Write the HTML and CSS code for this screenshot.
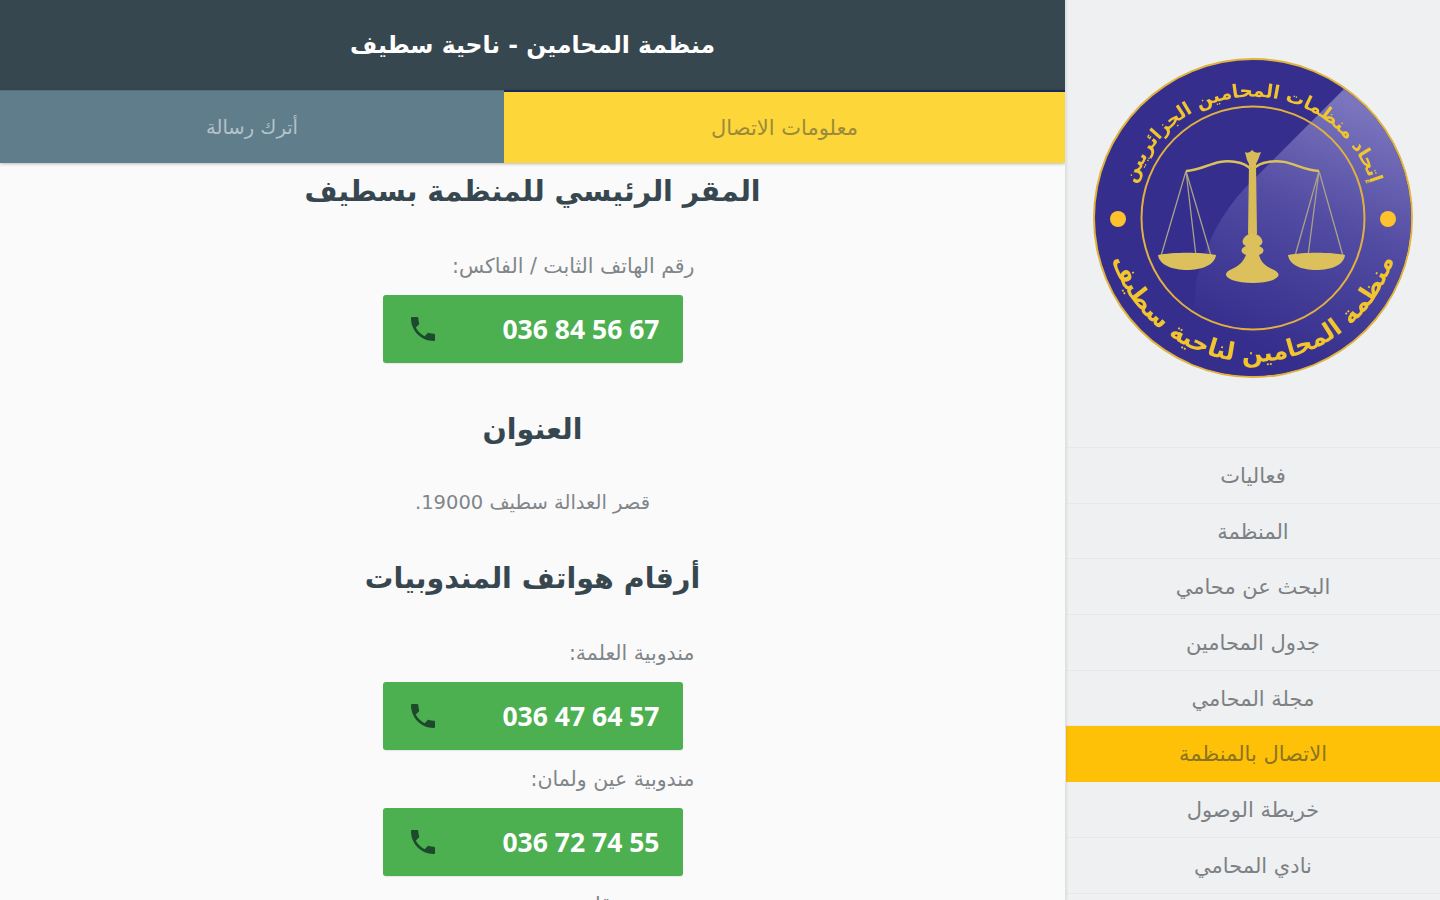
FILE: index.html
```html
<!DOCTYPE html>
<html lang="ar" dir="rtl">
<head>
<meta charset="utf-8">
<title>منظمة المحامين - ناحية سطيف</title>
<link rel="stylesheet" href="styles.css">
</head>
<body>
<div class="app">
  <aside class="sidebar">
    <div class="logo-box">
      <svg class="logo" viewBox="0 0 320 320" xmlns="http://www.w3.org/2000/svg" aria-label="شعار المنظمة">
        <defs>
          <clipPath id="disc"><circle cx="160" cy="160" r="158"/></clipPath>
          <linearGradient id="gloss" gradientUnits="userSpaceOnUse" x1="270" y1="50" x2="170" y2="290">
            <stop offset="0" stop-color="#7a75bd"/>
            <stop offset=".45" stop-color="#534ca3"/>
            <stop offset="1" stop-color="#352e8c"/>
          </linearGradient>
          <path id="arcTop" d="M38 146 A123 123 0 0 1 282 146"/>
          <path id="arcBottom" d="M16 190 A148 148 0 0 0 304 190"/>
        </defs>
        <circle cx="160" cy="160" r="160" fill="#e0b33c"/>
        <circle cx="160" cy="160" r="158" fill="#352e8c"/>
        <g clip-path="url(#disc)">
          <path d="M252 30 L160 122 C130 150 110 190 103 225 L95 330 L330 330 L330 30 Z" fill="url(#gloss)"/>
        </g>
        <circle cx="160" cy="160" r="111.500" fill="none" stroke="#e0b040" stroke-width="2"/>
        <circle cx="25" cy="161" r="8" fill="#fdc22d"/>
        <circle cx="295" cy="161" r="8" fill="#fdc22d"/>
        <g fill="none" stroke="#a9a08a" stroke-width="1.300">
          <path d="M93 113 L68 198 M93 113 L118 198 M93 113 L103 198"/>
          <path d="M226 113 L202 198 M226 113 L250 198 M226 113 L215 198"/>
        </g>
        <path d="M93 113 C112 112 122 100 143 104 C150 105 155 108 159 112 C163 108 168 105 175 104 C196 100 206 112 226 113" fill="none" stroke="#dcc05c" stroke-width="2.500"/>
        <path d="M152 94 Q156 96 159 92 Q162 96 168 94 L165 102 L163 106 L164 176 L155 176 L156 106 L154 102 Z" fill="#d8bc58"/>
        <path d="M156 176 C148 180 148 186 153 188 C147 190 147 195 153 197 C150 204 146 208 139 211 C132 214 130 218 139 222 C150 226 170 226 180 222 C189 218 186 214 179 211 C172 208 168 204 166 197 C172 195 172 190 166 188 C171 186 171 180 163 176 Z" fill="#dcc05c"/>
        <path d="M65 197 C80 194 108 194 123 197 C122 207 108 212 94 212 C80 212 66 207 65 197 Z" fill="#dcc05c"/>
        <path d="M195 197 C210 194 238 194 252 197 C251 207 238 212 223 212 C209 212 196 207 195 197 Z" fill="#dcc05c"/>
        <text class="logo-text logo-top"><textPath href="#arcTop" startOffset="50%" text-anchor="middle">إتحاد منظمات المحامين الجزائريين</textPath></text>
        <text class="logo-text logo-bottom"><textPath href="#arcBottom" startOffset="50%" text-anchor="middle">منظمة المحامين لناحية سطيف</textPath></text>
      </svg>
    </div>
    <nav class="menu">
      <a class="menu-item">فعاليات</a>
      <a class="menu-item">المنظمة</a>
      <a class="menu-item">البحث عن محامي</a>
      <a class="menu-item">جدول المحامين</a>
      <a class="menu-item">مجلة المحامي</a>
      <a class="menu-item active">الاتصال بالمنظمة</a>
      <a class="menu-item">خريطة الوصول</a>
      <a class="menu-item">نادي المحامي</a>
    </nav>
  </aside>
  <main class="main">
    <header class="topbar">منظمة المحامين - ناحية سطيف</header>
    <div class="tabs">
      <div class="tab tab-active">معلومات الاتصال</div>
      <div class="tab tab-idle">أترك رسالة</div>
    </div>
    <section class="content">
      <h2 class="heading heading-first">المقر الرئيسي للمنظمة بسطيف</h2>
      <div class="phone-block block-main">
        <p class="label">رقم الهاتف الثابت / الفاكس:</p>
        <a class="call"><svg class="phone" viewBox="0 0 24 24"><path d="M6.600 10.800c1.400 2.800 3.800 5.100 6.600 6.600l2.200-2.200c.3-.3.700-.4 1-.2 1.100.4 2.300.6 3.600.6.600 0 1 .4 1 1V20c0 .6-.4 1-1 1C10.600 21 3 13.400 3 4c0-.6.400-1 1-1h3.500c.6 0 1 .4 1 1 0 1.300.2 2.500.6 3.600.1.300 0 .7-.2 1z"/></svg><span class="num" dir="ltr">036 84 56 67</span></a>
      </div>
      <h2 class="heading heading-address">العنوان</h2>
      <p class="address">قصر العدالة سطيف 19000.</p>
      <h2 class="heading heading-phones">أرقام هواتف المندوبيات</h2>
      <div class="phone-block block-first">
        <p class="label">مندوبية العلمة:</p>
        <a class="call"><svg class="phone" viewBox="0 0 24 24"><path d="M6.600 10.800c1.400 2.800 3.800 5.100 6.600 6.600l2.200-2.200c.3-.3.700-.4 1-.2 1.100.4 2.300.6 3.600.6.600 0 1 .4 1 1V20c0 .6-.4 1-1 1C10.600 21 3 13.400 3 4c0-.6.400-1 1-1h3.500c.6 0 1 .4 1 1 0 1.300.2 2.500.6 3.600.1.300 0 .7-.2 1z"/></svg><span class="num" dir="ltr">036 47 64 57</span></a>
      </div>
      <div class="phone-block">
        <p class="label">مندوبية عين ولمان:</p>
        <a class="call"><svg class="phone" viewBox="0 0 24 24"><path d="M6.600 10.800c1.400 2.800 3.800 5.100 6.600 6.600l2.200-2.200c.3-.3.700-.4 1-.2 1.100.4 2.300.6 3.600.6.600 0 1 .4 1 1V20c0 .6-.4 1-1 1C10.600 21 3 13.400 3 4c0-.6.400-1 1-1h3.500c.6 0 1 .4 1 1 0 1.300.2 2.500.6 3.600.1.300 0 .7-.2 1z"/></svg><span class="num" dir="ltr">036 72 74 55</span></a>
      </div>
      <div class="phone-block">
        <p class="label">مندوبية بوقاعة:</p>
      </div>
    </section>
  </main>
</div>
</body>
</html>
```

FILE: styles.css
```css
* { box-sizing: border-box; }
html, body { margin: 0; height: 100%; overflow: hidden; }
body {
  font-family: "DejaVu Sans", "Noto Sans", sans-serif;
  background: #fafafa;
  color: #757575;
}
.app { display: flex; height: 900px; }
.sidebar {
  width: 374px;
  flex: none;
  background: #eef0f2;
  overflow: hidden;
}
.logo-box { height: 447px; padding: 58px 0 0 0; display: flex; justify-content: center; }
.logo { width: 320px; height: 320px; display: block; filter: blur(.5px); }
.logo-text { fill: #f2c52e; font-weight: 700; font-family: "DejaVu Sans", sans-serif; }
.logo-top { font-size: 18.500px; }
.logo-bottom { font-size: 24.500px; }
.menu { border-top: 1px solid #e6e8ea; }
.menu-item {
  display: flex;
  align-items: center;
  justify-content: center;
  height: 55.700px;
  padding-top: 1px;
  font-size: 21px;
  color: #7d8184;
  border-bottom: 1px solid #e6e8ea;
}
.menu-item.active { background: #ffc107; color: #8a7420; border-bottom-color: #ffc107; }
.main {
  flex: 1;
  min-width: 0;
  border-right: 1px solid #dfe1e3;
  box-shadow: 1px 0 2px rgba(0,0,0,.08);
  overflow: hidden;
}
.topbar {
  height: 90px;
  background: #37474f;
  color: #fff;
  font-size: 23.500px;
  font-weight: 700;
  display: flex;
  align-items: center;
  justify-content: center;
}
.tabs {
  display: flex;
  height: 73px;
  box-shadow: 0 1px 3px rgba(0,0,0,.25);
  position: relative;
}
.tab {
  display: flex;
  align-items: center;
  justify-content: center;
  font-size: 21px;
}
.tab-active {
  width: 561px;
  background: #fdd63a;
  color: #9a8a3a;
  border-top: 2px solid #152a5a;
}
.tab-idle { flex: 1; background: #607d8b; color: #b4c2c9; border-top: 1px solid #55707d; font-size: 19.500px; }
.content { display: flex; flex-direction: column; align-items: center; }
.heading {
  margin: 0;
  font-size: 28.500px;
  font-weight: 700;
  color: #37474f;
  line-height: 32px;
}
.heading-first { margin-top: 13px; }
.heading-address { margin-top: 51px; }
.heading-phones { margin-top: 50px; }
.address { margin: 47px 0 0; font-size: 19.500px; line-height: 20px; color: #80868a; }
.phone-block { width: 324px; display: flex; flex-direction: column; align-items: center; }
.block-main { margin-top: 47px; }
.block-first { margin-top: 47px; }
.phone-block + .phone-block { margin-top: 18px; }
.label {
  align-self: flex-start;
  margin: 0 0 18px;
  font-size: 20.500px;
  line-height: 22px;
  color: #80868a;
}
.call {
  width: 300px;
  height: 68px;
  background: #4caf50;
  border-radius: 3px;
  display: flex;
  align-items: center;
  padding: 0 23px 0 24px;
  justify-content: space-between;
  box-shadow: 0 1px 1px rgba(0,0,0,.08);
}
.num {
  order: -1;
  color: #fff;
  font-family: "Open Sans", sans-serif;
  font-weight: 700;
  font-size: 26.500px;
}
.phone { width: 32px; height: 32px; fill: #1d4a2a; }
```
